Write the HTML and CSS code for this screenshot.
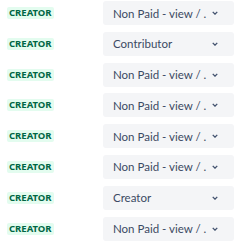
FILE: index.html
```html
<!DOCTYPE html>
<html lang="en">
<head>
  <meta charset="UTF-8" />
  <title>Roles</title>
  <link rel="stylesheet" href="styles.css">
</head>
<body>
  <div class="role-list">
    <div class="role-row">
      <span class="lozenge">Creator</span>
      <div class="role-select"><span class="value">Non Paid - view / .</span><svg class="chevron" viewBox="0 0 8 5"><path d="M1 1l3 3 3-3" /></svg></div>
    </div>
    <div class="role-row">
      <span class="lozenge">Creator</span>
      <div class="role-select"><span class="value">Contributor</span><svg class="chevron" viewBox="0 0 8 5"><path d="M1 1l3 3 3-3" /></svg></div>
    </div>
    <div class="role-row">
      <span class="lozenge">Creator</span>
      <div class="role-select"><span class="value">Non Paid - view / .</span><svg class="chevron" viewBox="0 0 8 5"><path d="M1 1l3 3 3-3" /></svg></div>
    </div>
    <div class="role-row">
      <span class="lozenge">Creator</span>
      <div class="role-select"><span class="value">Non Paid - view / .</span><svg class="chevron" viewBox="0 0 8 5"><path d="M1 1l3 3 3-3" /></svg></div>
    </div>
    <div class="role-row">
      <span class="lozenge">Creator</span>
      <div class="role-select"><span class="value">Non Paid - view / .</span><svg class="chevron" viewBox="0 0 8 5"><path d="M1 1l3 3 3-3" /></svg></div>
    </div>
    <div class="role-row">
      <span class="lozenge">Creator</span>
      <div class="role-select"><span class="value">Non Paid - view / .</span><svg class="chevron" viewBox="0 0 8 5"><path d="M1 1l3 3 3-3" /></svg></div>
    </div>
    <div class="role-row">
      <span class="lozenge">Creator</span>
      <div class="role-select"><span class="value">Creator</span><svg class="chevron" viewBox="0 0 8 5"><path d="M1 1l3 3 3-3" /></svg></div>
    </div>
    <div class="role-row">
      <span class="lozenge">Creator</span>
      <div class="role-select"><span class="value">Non Paid - view / .</span><svg class="chevron" viewBox="0 0 8 5"><path d="M1 1l3 3 3-3" /></svg></div>
    </div>
  </div>
</body>
</html>
```

FILE: styles.css
```css
* {
  box-sizing: border-box;
}

body {
  margin: 0;
  background: #ffffff;
  font-family: 'Lato', 'Noto Sans', sans-serif;
}

.role-list {
  padding: 1px 11px 0 7px;
}

.role-row {
  display: grid;
  grid-template-columns: 96px minmax(0, 1fr);
  align-items: center;
  height: 30.8px;
  padding-bottom: 6.8px;
}

.lozenge {
  justify-self: start;
  background: #e3fcef;
  color: #006644;
  font-family: 'Noto Sans', sans-serif;
  font-size: 9.5px;
  font-weight: 700;
  text-transform: uppercase;
  line-height: 12px;
  padding: 0 2px;
  border-radius: 2px;
}

.role-select {
  display: flex;
  align-items: center;
  min-width: 0;
  height: 24px;
  background: #f4f5f7;
  border-radius: 3px;
  padding: 0 16px 0 10px;
  color: #3b4a63;
  font-size: 11.5px;
}

.value {
  flex: 1;
  min-width: 0;
  white-space: nowrap;
  overflow: hidden;
}

.chevron {
  flex: none;
  width: 6px;
  height: 4px;
  margin-left: 4px;
  fill: none;
  stroke: #42526e;
  stroke-width: 1.8;
}
```
